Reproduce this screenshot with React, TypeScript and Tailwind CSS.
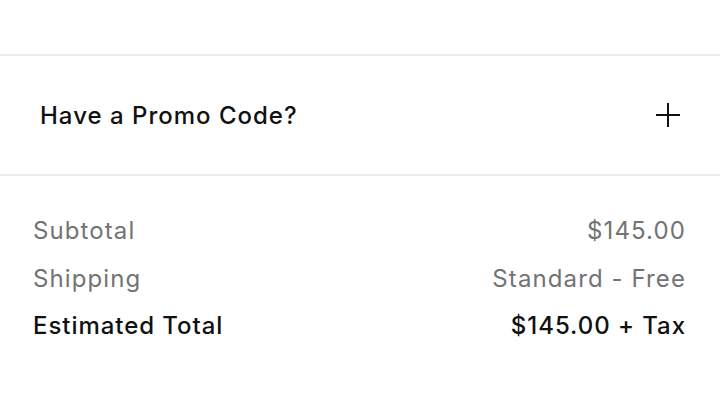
const rows = [
  { label: 'Subtotal', value: '$145.00' },
  { label: 'Shipping', value: 'Standard - Free' },
]

function PlusIcon() {
  return (
    <svg width="24" height="24" viewBox="0 0 24 24" fill="none" stroke="#111" strokeWidth="2">
      <path d="M0 12h24M12 0v24" />
    </svg>
  )
}

export default function App() {
  return (
    <div className="w-[720px] h-[405px] bg-white font-['Inter',sans-serif] text-[24px]">
      <div className="h-[54px]" />

      {/* Promo code toggle */}
      <div className="h-[122px] border-y-2 border-[#ebebeb] flex items-center justify-between pl-10 pr-10">
        <span className="font-medium tracking-[1px] text-[#111] pt-[2px]">Have a Promo Code?</span>
        <PlusIcon />
      </div>

      {/* Order summary */}
      <div className="pt-[31px] pl-[33px] pr-[34px]">
        {rows.map(r => (
          <div key={r.label} className="flex justify-between leading-[47.5px] text-[#737373] tracking-[1.1px]">
            <span>{r.label}</span>
            <span>{r.value}</span>
          </div>
        ))}
        <div className="flex justify-between leading-[47.5px] font-medium text-[#111] tracking-[0.95px]">
          <span>Estimated Total</span>
          <span>$145.00 + Tax</span>
        </div>
      </div>
    </div>
  )
}
